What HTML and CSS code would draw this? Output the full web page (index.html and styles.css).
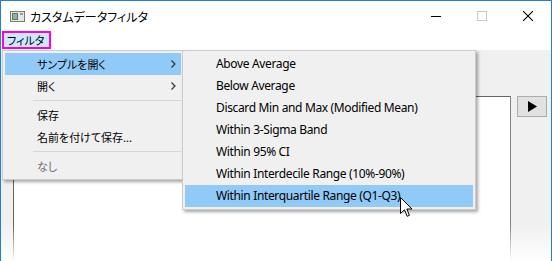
FILE: index.html
```html
<!DOCTYPE html>
<html>
<head>
    <title>カスタムデータフィルタ</title>
    <link rel="stylesheet" href="styles.css">
</head>
<body>
<div class="window">
    <!-- title bar -->
    <div class="titlebar">
        <svg class="app-icon" width="15" height="11" viewBox="0 0 15 11">
            <rect x="0.5" y="0.5" width="14" height="10" fill="#e6e6e6" stroke="#7a7a7a"/>
            <rect x="2" y="2" width="6" height="7" fill="#5d7a6a"/>
            <rect x="3" y="3" width="4" height="5" fill="#8fb39a"/>
            <rect x="10" y="2" width="3" height="2" fill="#9a9a9a"/>
        </svg>
        <span class="title">カスタムデータフィルタ</span>
        <div class="caption-buttons">
            <span class="cap-btn">
                <svg width="10" height="10" viewBox="0 0 10 10"><line x1="0" y1="5.5" x2="10" y2="5.5" stroke="#000"/></svg>
            </span>
            <span class="cap-btn">
                <svg width="10" height="10" viewBox="0 0 10 10"><rect x="0.5" y="0.5" width="9" height="9" fill="none" stroke="#c8c8c8"/></svg>
            </span>
            <span class="cap-btn">
                <svg width="10" height="10" viewBox="0 0 10 10"><path d="M0 0 L10 10 M10 0 L0 10" stroke="#000" stroke-width="1.1"/></svg>
            </span>
        </div>
    </div>

    <!-- menu bar -->
    <div class="menubar">
        <span class="menubar-item active">フィルタ</span>
    </div>

    <!-- client area -->
    <div class="client">
        <div class="list-box"></div>
        <div class="play-btn">
            <svg width="9" height="11" viewBox="0 0 9 11"><path d="M0 0 L9 5.5 L0 11 Z" fill="#000"/></svg>
        </div>
    </div>

    <!-- dropdown menu -->
    <div class="menu main-menu">
        <div class="menu-item selected">サンプルを開く<span class="arrow"><svg width="5" height="8" viewBox="0 0 5 8"><path d="M0.5 0.5 L4 4 L0.5 7.5" fill="none" stroke="#333" stroke-width="1.2"/></svg></span></div>
        <div class="menu-item">開く<span class="arrow"><svg width="5" height="8" viewBox="0 0 5 8"><path d="M0.5 0.5 L4 4 L0.5 7.5" fill="none" stroke="#333" stroke-width="1.2"/></svg></span></div>
        <div class="menu-sep"></div>
        <div class="menu-item">保存</div>
        <div class="menu-item">名前を付けて保存...</div>
        <div class="menu-sep"></div>
        <div class="menu-item disabled">なし</div>
    </div>

    <!-- submenu -->
    <div class="menu sub-menu">
        <div class="menu-item latin">Above Average</div>
        <div class="menu-item latin">Below Average</div>
        <div class="menu-item latin">Discard Min and Max (Modified Mean)</div>
        <div class="menu-item latin">Within 3-Sigma Band</div>
        <div class="menu-item latin">Within 95% CI</div>
        <div class="menu-item latin">Within Interdecile Range (10%-90%)</div>
        <div class="menu-item latin selected">Within Interquartile Range (Q1-Q3)</div>
    </div>

    <!-- mouse cursor -->
    <svg class="cursor" width="13" height="21" viewBox="0 0 13 21">
        <path d="M0.5 0.5 L0.5 16.5 L4.5 12.8 L7.2 19.3 L9.4 18.3 L6.8 12 L12 12 Z" fill="#fff" stroke="#000" stroke-linejoin="round"/>
    </svg>

    <div class="fade"></div>
</div>
</body>
</html>
```

FILE: styles.css
```css
/* page */
body {
    margin: 0;
    padding: 0;
    background-color: #ffffff;
    font-family: 'Noto Sans CJK JP', 'Noto Sans', sans-serif;
    font-size: 12px;
    color: #000000;
}

.window {
    position: relative;
    width: 552px;
    height: 261px;
    box-sizing: border-box;
    border: 1px solid #1c80d8;
    border-bottom: none;
    overflow: hidden;
    display: flex;
    flex-direction: column;
}

/* title bar */
.titlebar {
    height: 30px;
    display: flex;
    align-items: center;
    background-color: #ffffff;
    flex-shrink: 0;
}

.app-icon {
    margin-left: 9px;
}

.title {
    margin-left: 5px;
    font-feature-settings: 'palt';
    font-size: 12px;
    margin-top: 1px;
}

.caption-buttons {
    margin-left: auto;
    display: flex;
    height: 30px;
}

.cap-btn {
    width: 46px;
    display: flex;
    justify-content: center;
    align-items: center;
}

/* menu bar */
.menubar {
    height: 19px;
    display: flex;
    align-items: flex-start;
    padding-left: 1px;
    background-color: #ffffff;
    flex-shrink: 0;
}

.menubar-item {
    height: 18px;
    line-height: 14px;
    padding: 0 5px 0 3px;
    box-sizing: border-box;
    white-space: nowrap;
    font-size: 11px;
    font-feature-settings: 'palt';
}

.menubar-item.active {
    background-color: #cce8ff;
    border: 2px solid #ff00d8;
}

/* client area */
.client {
    flex: 1;
    background-color: #f0f0f0;
    display: flex;
    align-items: flex-start;
    gap: 6px;
    padding: 46px 4px 0 12px;
}

.list-box {
    flex: 1;
    height: 200px;
    background-color: #ffffff;
    border: 1px solid #646464;
    border-right-color: #828282;
}

.play-btn {
    width: 28px;
    height: 19px;
    background-color: #e1e1e1;
    border: 1px solid #adadad;
    display: flex;
    justify-content: center;
    align-items: center;
}

/* popup menus */
.menu {
    position: absolute;
    background-color: #f0f0f0;
    border: 1px solid #cccccc;
    padding: 2px;
    box-shadow: 2px 2px 3px rgba(0, 0, 0, 0.35);
}

.main-menu {
    left: 1px;
    top: 49px;
    width: 176px;
}

.sub-menu {
    left: 181px;
    top: 49px;
    width: 288px;
}

.menu-item {
    position: relative;
    height: 22px;
    line-height: 22px;
    padding-left: 32px;
    font-size: 11px;
    font-feature-settings: 'palt';
    white-space: nowrap;
}

.menu-item.latin {
    font-family: 'Noto Sans', sans-serif;
    font-size: 12px;
    letter-spacing: -0.35px;
    padding-left: 31px;
}

.menu-item.selected {
    background-color: #91c9f7;
}

.menu-item.disabled {
    color: #6d6d6d;
}

.arrow {
    position: absolute;
    right: 5px;
    top: 7px;
    line-height: 0;
}

.menu-sep {
    height: 1px;
    background-color: #d7d7d7;
    margin: 3px 0 3px 28px;
}

.cursor {
    position: absolute;
    left: 399px;
    top: 196px;
}

.fade {
    position: absolute;
    left: -1px;
    right: -1px;
    bottom: 0;
    height: 36px;
    background: linear-gradient(rgba(255, 255, 255, 0), #ffffff);
}
```
